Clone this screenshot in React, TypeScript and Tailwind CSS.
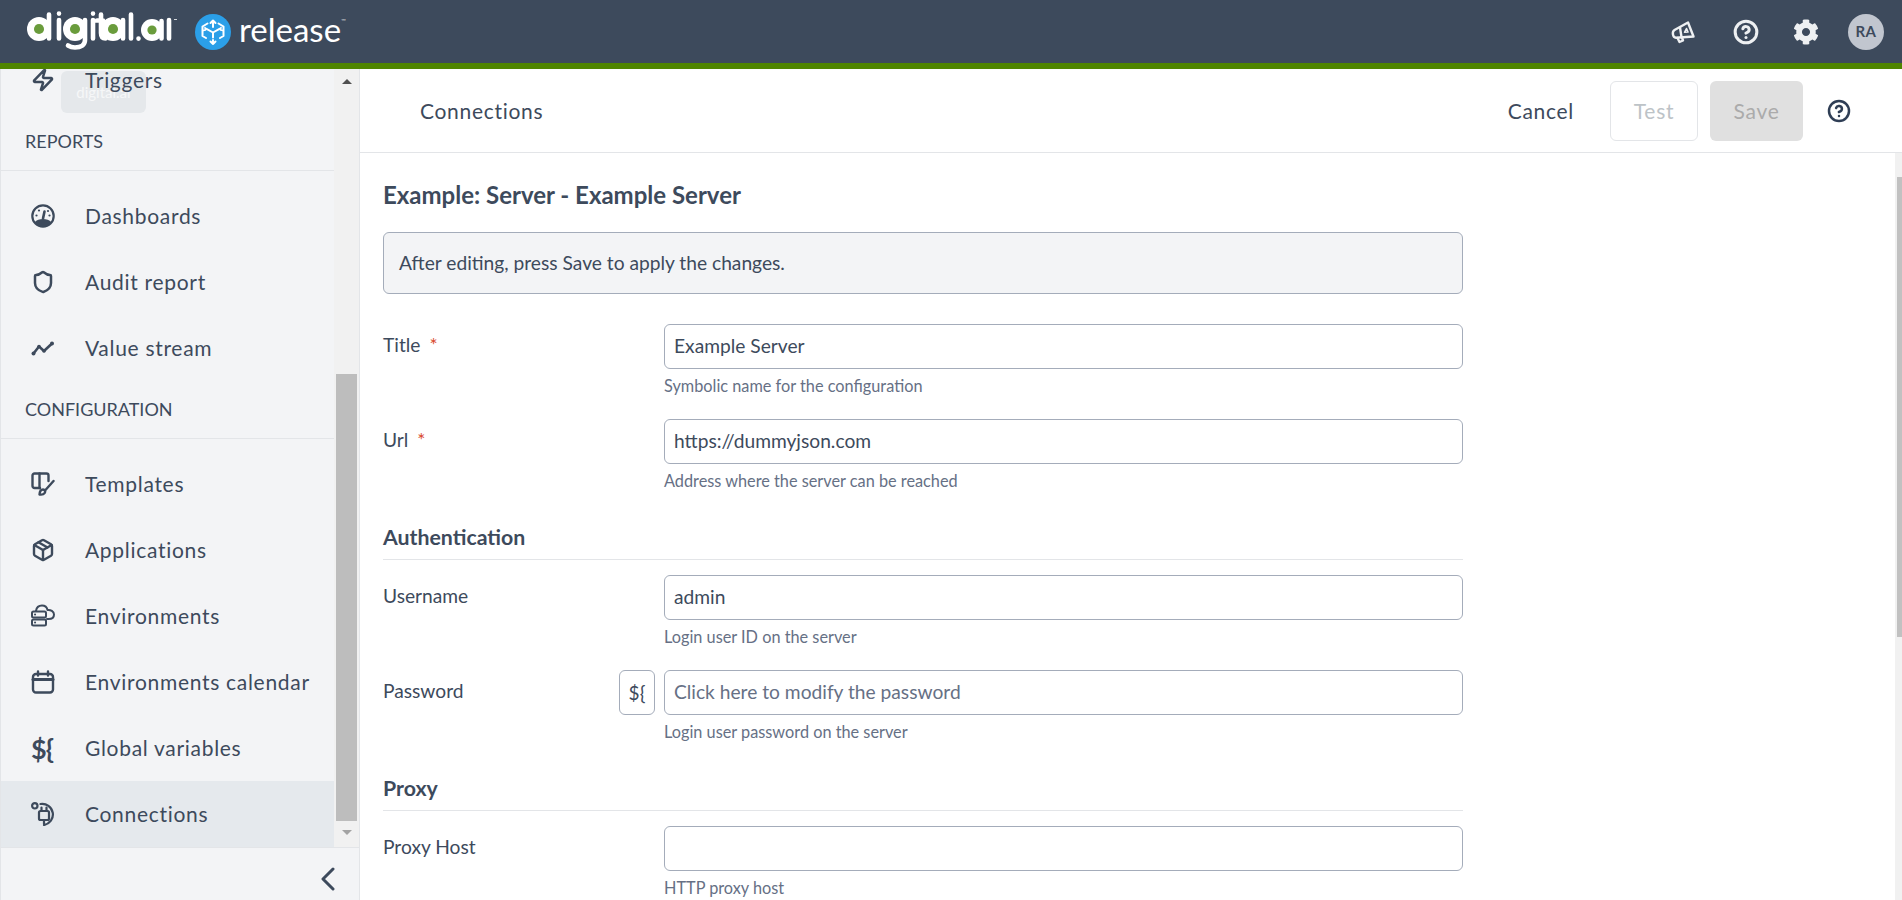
import React from "react";
import { Zap, Shield, CircleHelp, Package } from "lucide-react";
import { FaCog } from "react-icons/fa";

const C = "#3d4a5c";

function Gauge() {
  return (
    <svg width="24" height="24" viewBox="0 0 24 24" fill="none" stroke={C} strokeWidth="2.200">
      <circle cx="12" cy="12" r="10.700" />
      <path d="M3.500 18.500C5.500 15.800 8.800 15 12 15s6.500.8 8.500 3.500C18.500 21.500 15 23 12 23s-6.500-1.500-8.500-4.500z" fill={C} stroke="none" />
      <path d="M12 14.500l1.500-7" strokeWidth="2.600" strokeLinecap="round" />
      <circle cx="5.500" cy="11.500" r="1.100" fill={C} stroke="none" />
      <circle cx="8" cy="6.500" r="1.100" fill={C} stroke="none" />
      <circle cx="18.500" cy="11.500" r="1.100" fill={C} stroke="none" />
      <circle cx="17" cy="7" r="1.100" fill={C} stroke="none" />
    </svg>
  );
}
function Stream() {
  return (
    <svg width="24" height="24" viewBox="0 0 24 24" fill="none" stroke={C} strokeWidth="2.600" strokeLinecap="round" strokeLinejoin="round">
      <path d="M2.500 17.500L8 10.500l5 4.500 8-7.500" />
      <circle cx="2.500" cy="17.500" r="2" fill={C} stroke="none" />
      <circle cx="8" cy="10.500" r="1.800" fill={C} stroke="none" />
      <circle cx="13" cy="15" r="1.800" fill={C} stroke="none" />
      <circle cx="21" cy="7.500" r="2" fill={C} stroke="none" />
    </svg>
  );
}
function Template() {
  return (
    <svg width="24" height="24" viewBox="0 0 24 24" fill="none" stroke={C} strokeWidth="2.400" strokeLinecap="round" strokeLinejoin="round">
      <path d="M9 16H3.500A2 2 0 0 1 1.500 14V3.500a2 2 0 0 1 2-2h12a2 2 0 0 1 2 2V9" />
      <path d="M8.500 1.500V16" />
      <path d="M22.500 9L14.500 18" />
      <path d="M8.500 22.500c.2-3 1.600-5 3.500-5s2.800 2 1.600 3.600c-1 1.400-3.300 1.700-5.100 1.400z" />
    </svg>
  );
}
function Env() {
  return (
    <svg width="24" height="24" viewBox="0 0 24 24" fill="none" stroke={C} strokeWidth="2" strokeLinecap="round" strokeLinejoin="round">
      <path d="M5 7c.5-3.500 3-5.500 6-5.500 3 0 5 2 5.500 4.500 3-.5 6.500 1.500 6.500 4.500 0 2.500-2 4.500-5.500 4.500H16" />
      <rect x="1" y="7.500" width="14" height="6" rx="1.500" />
      <rect x="1" y="15.500" width="14" height="6" rx="1.500" />
      <path d="M4 10.500h.1M4 18.500h.1" />
    </svg>
  );
}
function Cal() {
  return (
    <svg width="24" height="24" viewBox="0 0 24 24" fill="none" stroke={C} strokeWidth="2.400" strokeLinecap="round" strokeLinejoin="round">
      <rect x="2" y="4" width="20" height="18.500" rx="3" />
      <path d="M7 1.500v4M17 1.500v4" />
      <path d="M2 9.500h20" strokeWidth="3" />
    </svg>
  );
}
function Conn() {
  return (
    <svg width="24" height="24" viewBox="0 0 24 24" fill="none" stroke={C} strokeWidth="2.200" strokeLinecap="round" strokeLinejoin="round">
      <circle cx="3.800" cy="3.800" r="2.700" />
      <path d="M9.500 2A10.500 10.500 0 0 1 13 23" />
      <rect x="8" y="9" width="10" height="9" rx="1.500" />
      <path d="M10.500 5.500V9M15.500 5.500V9M13 18v4" />
    </svg>
  );
}
function Vars() {
  return <span className="text-[27px] font-bold leading-none tracking-[-1px] text-[#3d4a5c]">${"{"}</span>;
}
function Chevron() {
  return (
    <svg width="14" height="24" viewBox="0 0 14 24" fill="none" stroke={C} strokeWidth="3" strokeLinecap="round" strokeLinejoin="round">
      <path d="M12 2L2 12l10 10" />
    </svg>
  );
}
function Horn() {
  return (
    <svg width="24" height="24" viewBox="0 0 24 24" fill="none" stroke="#eef0f2" strokeWidth="2.400" strokeLinecap="round" strokeLinejoin="round">
      <path d="M17 2.500L3.500 10C.8 11.500 1.500 17.500 5 17.800L22.500 16.500z" />
      <path d="M9 7.500l1.500 9.500" />
      <path d="M6.500 18l2 4 3.500-1.500-1-3" />
      <path d="M15.500 8.500l1.500 3.500-3.500.3z" strokeWidth="1.600" />
    </svg>
  );
}

function NavItem({ icon, label, active }: { icon: React.ReactNode; label: string; active?: boolean }) {
  return (
    <div className={`flex h-[66px] items-center pl-[30px] text-[21px] tracking-[0.7px] text-[#3d4a5c] ${active ? "bg-[#e5e9ed]" : ""}`}>
      <span className="flex w-[54px] shrink-0 items-center">{icon}</span>
      <span className="whitespace-nowrap">{label}</span>
    </div>
  );
}

function SectionHead({ children }: { children: React.ReactNode }) {
  return (
    <div className="mb-[12px] flex h-[58px] items-center border-b border-[#e3e5e8] pl-[24px] text-[18px] text-[#3d4a5c]">
      {children}
    </div>
  );
}

function Bowl({ x, r = 12 }: { x: number; r?: number }) {
  return (
    <g>
      <circle cx={x} cy={41 - r} r={r} fill="#fff" />
      <circle cx={x} cy={41 - r} r={r * 0.42} fill="#6a9c3c" />
    </g>
  );
}

function Logo() {
  return (
    <svg width="160" height="63" viewBox="23 0 160 63" fill="none" role="img" aria-label="digital.ai">
      <Bowl x={39} />
      <Bowl x={75} />
      <Bowl x={113} />
      <Bowl x={152} r={11} />
      <path d="M49 14.500V38.500M59 20V38.500M59 13.500v.1M85 20v20c0 5-4 7.500-10 7.500-3 0-5-.7-7-2M93 20V38.500M93 13.500v.1M101 14.500V33c0 4 2 5.500 4.500 5.500M97 20.500h6M123 20V38.500M131 14.500V38.500M138.500 38.500v.1M161.500 21V38.500M169 20V38.500" stroke="#fff" strokeWidth="4.600" strokeLinecap="round" />
      <path d="M174 19.500h3" stroke="#cfd3d8" strokeWidth="1" />
    </svg>
  );
}

function ReleaseMark() {
  return (
    <svg width="36" height="36" viewBox="0 0 36 36" fill="none" stroke="#fff" strokeWidth="2" strokeLinecap="round" strokeLinejoin="round">
      <circle cx="18" cy="18" r="18" fill="#2b9fe8" stroke="none" />
      <path d="M12.500 9.500L7.500 12.500v9.500l3.500 2M23.500 9.500l5 3v9.500l-3.500 2" />
      <path d="M18 18.500l-6.500-3.700M18 18.500l6.500-3.700M18 18.500v5" />
      <path d="M18 13V6.500M15.500 9L18 6.500 20.500 9M18 30v-4M15.500 27.500L18 30l2.500-2.500" />
      <path d="M8 16.500l2.500-.5-.5-2.500M28 16.500l-2.500-.5.5-2.500" strokeWidth="1.600" />
    </svg>
  );
}

function Field({ label, req, value, placeholder, hint, vars }: { label: string; req?: boolean; value?: string; placeholder?: string; hint: string; vars?: boolean }) {
  return (
    <div className="flex h-[95px]">
      <div className="relative flex w-[281px] shrink-0 pt-[8px] text-[19.2px] leading-[26px] text-[#3d4a5c]">
        <span>{label}</span>
        {req && <span className="ml-[9px] text-[#d9482b]">*</span>}
        {vars && (
          <div className="absolute right-[9px] top-0 flex h-[45px] w-[36px] items-center justify-center rounded-[6px] border border-[#a4acba] text-[19px]">
            ${"{"}
          </div>
        )}
      </div>
      <div className="flex-1">
        <div className={`flex h-[45px] items-center rounded-[6px] border border-[#a4acba] px-[9px] text-[19.2px] ${placeholder ? "text-[#667085]" : "text-[#3d4a5c]"}`}>
          {value ?? placeholder}
        </div>
        <div className="mt-[7px] text-[16.300px] leading-[20px] text-[#667085]">{hint}</div>
      </div>
    </div>
  );
}

function Group({ children }: { children: React.ReactNode }) {
  return (
    <div className="mb-[15px] flex h-[46px] items-center border-b border-[#e3e5e8] pt-[2px] text-[21.300px] font-bold text-[#3d4a5c]">
      {children}
    </div>
  );
}

export default function App() {
  return (
    <div className="flex h-[900px] w-[1902px] flex-col overflow-hidden bg-white font-['Lato',sans-serif]">
      <header className="flex h-[69px] shrink-0 items-center border-b-[6px] border-[#4f8500] bg-[#3d4a5c] pl-[23px] pr-[18px]">
        <Logo />
        <div className="ml-[12px] flex items-center">
          <ReleaseMark />
          <span className="mb-[5px] ml-[8px] text-[33px] leading-none text-white">release</span>
          <span className="relative -top-[11px] text-[6px] text-[#cfd3d8]">™</span>
        </div>
        <div className="ml-auto flex items-center text-[#eef0f2]">
          <Horn />
          <CircleHelp size={26} strokeWidth={2.800} className="ml-[38px]" />
          <FaCog size={26} className="ml-[34px]" />
          <div className="ml-[29px] flex h-[36px] w-[36px] items-center justify-center rounded-full bg-[#c1c6cf] text-[15px] font-bold tracking-[0.5px] text-[#3d4a5c]">RA</div>
        </div>
      </header>

      <div className="flex min-h-0 flex-1">
        <aside className="relative flex w-[360px] shrink-0 flex-col border-x border-[#e3e5e8] bg-[#f3f4f6]">
          <div className="absolute left-[60px] top-[2px] flex h-[42px] w-[85px] items-center justify-center rounded-[6px] bg-[#e5e8eb] text-[15px] text-[#f6f7f8]">digital.ai</div>
          <div className="relative flex min-h-0 flex-1">
            <nav className="relative z-10 min-w-0 flex-1 overflow-hidden">
              <div className="-mt-[22px]">
                <NavItem icon={<Zap size={24} strokeWidth={2.500} color={C} />} label="Triggers" />
                <SectionHead>REPORTS</SectionHead>
                <NavItem icon={<Gauge />} label="Dashboards" />
                <NavItem icon={<Shield size={24} strokeWidth={2.500} color={C} />} label="Audit report" />
                <NavItem icon={<Stream />} label="Value stream" />
                <SectionHead>CONFIGURATION</SectionHead>
                <NavItem icon={<Template />} label="Templates" />
                <NavItem icon={<Package size={24} strokeWidth={2.400} color={C} />} label="Applications" />
                <NavItem icon={<Env />} label="Environments" />
                <NavItem icon={<Cal />} label="Environments calendar" />
                <NavItem icon={<Vars />} label="Global variables" />
                <NavItem icon={<Conn />} label="Connections" active />
              </div>
            </nav>
            <div className="flex w-[25px] shrink-0 flex-col items-center bg-[#f1f1f1]">
              <div className="mt-[10px] h-0 w-0 border-x-[5.500px] border-b-[5.500px] border-x-transparent border-b-[#505050]" />
              <div className="mt-[290px] h-[447px] w-[21px] bg-[#bdbdbd]" />
              <div className="mt-[9px] h-0 w-0 border-x-[5.500px] border-t-[5.500px] border-x-transparent border-t-[#a3a3a3]" />
            </div>
          </div>
          <div className="flex h-[53px] shrink-0 items-center justify-end border-t border-[#e3e5e8] pr-[24px] pt-[10px]">
            <Chevron />
          </div>
        </aside>

        <main className="flex min-w-0 flex-1 flex-col">
          <div className="flex h-[84px] shrink-0 items-center border-b border-[#e3e5e8] pl-[60px] pr-[51px]">
            <span className="text-[21px] tracking-[0.7px] text-[#3d4a5c]">Connections</span>
            <span className="ml-auto text-[21px] tracking-[0.7px] text-[#3d4a5c]">Cancel</span>
            <div className="ml-[36px] flex h-[60px] w-[88px] items-center justify-center rounded-[6px] border border-[#e3e5e8] text-[21px] tracking-[0.7px] text-[#bdc3c7]">Test</div>
            <div className="ml-[12px] flex h-[60px] w-[93px] items-center justify-center rounded-[6px] bg-[#e0e0e0] text-[21px] tracking-[0.7px] text-[#ababab]">Save</div>
            <CircleHelp size={24} strokeWidth={2.500} color="#2f3e55" className="ml-[24px]" />
          </div>
          <div className="flex min-h-0 flex-1">
            <div className="min-w-0 flex-1 overflow-hidden pl-[23px]">
              <div className="w-[1080px]">
                <h1 className="mt-[28px] text-[24px] font-bold leading-[28px] text-[#3d4a5c]">Example: Server - Example Server</h1>
                <div className="mb-[30px] mt-[23px] flex h-[62px] items-center rounded-[6px] border border-[#a4acba] bg-[#f3f4f6] px-[15px] text-[19.2px] text-[#3d4a5c]">After editing, press Save to apply the changes.</div>
                <Field label="Title" req value="Example Server" hint="Symbolic name for the configuration" />
                <Field label="Url" req value="https://dummyjson.com" hint="Address where the server can be reached" />
                <Group>Authentication</Group>
                <Field label="Username" value="admin" hint="Login user ID on the server" />
                <Field label="Password" vars placeholder="Click here to modify the password" hint="Login user password on the server" />
                <Group>Proxy</Group>
                <Field label="Proxy Host" value="" hint="HTTP proxy host" />
              </div>
            </div>
            <div className="w-[7px] shrink-0 bg-[#f1f1f1] pl-[2px]">
              <div className="mt-[24px] h-[460px] bg-[#c1c1c1]" />
            </div>
          </div>
        </main>
      </div>
    </div>
  );
}
